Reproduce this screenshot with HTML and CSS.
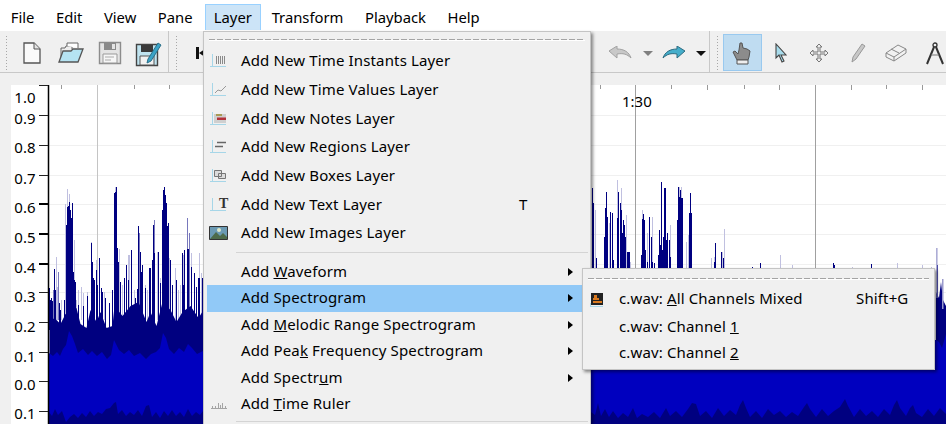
FILE: index.html
```html
<!DOCTYPE html>
<html lang="en">
<head>
    <meta charset="UTF-8">
    <title>Sonic Visualiser</title>
    <link rel="stylesheet" href="styles.css">
</head>
<body>
    <div class="menubar">
        <span class="menubar-item">File</span>
        <span class="menubar-item">Edit</span>
        <span class="menubar-item">View</span>
        <span class="menubar-item">Pane</span>
        <span class="menubar-item menubar-item-open">Layer</span>
        <span class="menubar-item">Transform</span>
        <span class="menubar-item">Playback</span>
        <span class="menubar-item">Help</span>
    </div>

    <div class="toolbar">
        <div class="tool-group">
            <span class="handle"></span>
            <div class="tool">
                <svg width="20" height="24" viewBox="0 0 20 24"><path d="M2 2h10l6 6v14H2z" fill="#fafafa" stroke="#555" stroke-width="1.3"/><path d="M12 2v6h6" fill="#e4e4e4" stroke="#555"/></svg>
            </div>
            <div class="tool">
                <svg width="26" height="22" viewBox="0 0 26 22"><path d="M3 18V6h4l1-2h6v3" fill="#eee" stroke="#666"/><path d="M9 4V1h11v5" fill="#fff" stroke="#666"/><path d="M1 20 5 9h8l2-2h10l-5 13z" fill="#b5e3f2" stroke="#555" stroke-width="1.3"/></svg>
            </div>
            <div class="tool">
                <svg width="24" height="24" viewBox="0 0 24 24"><path d="M1.500 1.500h21v21h-21z" fill="#e4e4e4" stroke="#8c8c8c" stroke-width="1.4"/><path d="M6 2h12v7H6z" fill="#8a8a8a"/><path d="M14 3h3v5h-3z" fill="#e4e4e4"/><path d="M5 13h14v9H5z" fill="#f6f6f6" stroke="#999"/><path d="M7 16h9M7 19h6" stroke="#aaa"/></svg>
            </div>
            <div class="tool">
                <svg width="27" height="27" viewBox="0 0 27 27"><path d="M1.500 4.500h21v21h-21z" fill="#bfe3ef" stroke="#444" stroke-width="1.4"/><path d="M6 5h12v7H6z" fill="#3a3a3a"/><path d="M5 16h14v9H5z" fill="#f2f2f2" stroke="#555"/><path d="M13 19 23 3l3 2-10 16-4 2z" fill="#3aa3c7" stroke="#2b6f88"/></svg>
            </div>
            <span class="tool-sep"></span>
            <span class="handle"></span>
            <div class="tool">
                <svg width="12" height="12" viewBox="0 0 12 12"><path d="M0 0h3v12H0zM12 0v12L3 6z" fill="#111"/></svg>
            </div>
        </div>

        <div class="tool-group tool-group-right">
            <div class="tool">
                <svg width="24" height="14" viewBox="0 0 24 14"><path d="M1 5 9 0v3c7 0 12 3 14 9-4-4-8-5-14-4v4z" fill="#c8c8c8" stroke="#a2a2a2"/></svg>
            </div>
            <div class="tool-arrow"><span class="drop drop-off"></span></div>
            <div class="tool tool-redo">
                <svg width="24" height="14" viewBox="0 0 24 14"><path d="M23 5 15 0v3C8 3 3 6 1 12c4-4 8-5 14-4v4z" fill="#45aecb" stroke="#2d6b80"/></svg>
            </div>
            <div class="tool-arrow tool-arrow-last"><span class="drop"></span></div>
            <span class="tool-sep"></span>
            <span class="handle"></span>
            <div class="tool tool-mode tool-on">
                <svg width="20" height="24" viewBox="0 0 20 24"><path d="M5 19 1 11l2-1 3 3 1-4 1-7h2l1 5 4 1 3 2-1 6-1 3z" fill="#8c8c8c" stroke="#555"/><path d="M5 19h11v4H5z" fill="#eee" stroke="#555"/></svg>
            </div>
            <div class="tool tool-mode">
                <svg width="12" height="20" viewBox="0 0 12 20"><path d="M1 1v14l3-3 3 7 2-1-3-6h5z" fill="#a8dcec" stroke="#444" stroke-width="1.1"/></svg>
            </div>
            <div class="tool tool-mode">
                <svg width="20" height="20" viewBox="0 0 20 20"><path d="M10 1l3 3h-2v5h5V7l3 3-3 3v-2h-5v5h2l-3 3-3-3h2v-5H4v2l-3-3 3-3v2h5V4H7z" fill="#eee" stroke="#777"/></svg>
            </div>
            <div class="tool tool-mode">
                <svg width="16" height="20" viewBox="0 0 16 20"><path d="M12 1l3 2L6 16l-4 3 1-5z" fill="#c8c8c8" stroke="#999"/></svg>
            </div>
            <div class="tool tool-mode">
                <svg width="22" height="18" viewBox="0 0 22 18"><path d="M1 9 13 1l8 4v4L9 17l-8-4z" fill="#f2f2f2" stroke="#888"/><path d="M1 9l8 4 12-8M9 13v4M6 5l8 4" fill="none" stroke="#888"/></svg>
            </div>
            <div class="tool tool-mode">
                <svg width="18" height="24" viewBox="0 0 18 24"><circle cx="9" cy="4" r="2" fill="none" stroke="#333" stroke-width="1.3"/><path d="M8 6 1 23M10 6l7 17" stroke="#333" stroke-width="2"/><path d="M5 14h8" stroke="#777"/></svg>
            </div>
        </div>
    </div>

    <div class="pane-strip"></div>

    <div class="pane">
        <svg class="pane-canvas" width="935" height="339" viewBox="11 85 935 339">
            <!-- grid -->
            <path class="grid-h" d="M49 115.500H946M49 145.500H946M49 175.500H946M49 204.500H946M49 234.500H946M49 264.500H946M49 292.500H946"/>
            <path class="grid-v" d="M97.500 85V424"/>
            <path class="grid-v-dark" d="M635.500 85V424M815.500 85V424"/>
            <path class="tick-top" d="M61.500 85v4M134.500 85v4M169.500 85v4M600.500 85v4M671.500 85v4M707.500 85v5M744.500 85v4M779.500 85v5M851.500 85v5M886.500 85v4M922.500 85v5"/>

            <!-- waveform peaks, left of the menu -->
            <g transform="translate(.5 0)">
                <path class="wave-light" d="M56 257V320M57 287V320M61 300V320M65 204V320M67 189V320M69 194V320M72 203V320M74 240V320M76 300V320M78 290V320M81 287V320M83 293V320M87 292V320M91 242V320M96 260V320M97 270V320M104 292V320M115 187V320M119 249V320M122 285V320M128 255V320M129 255V320M134 290V320M139 233V320M145 285V320M147 290V320M154 253V320M157 252V320M160 278V320M168 227V320M169 258V320M175 268V320M178 290V320M180 285V320M183 255V320M191 253V320M194 273V320M199 253V320M201 273V320"/>
                <path class="wave-mid" d="M187 218V320M189 233V320M53 290V320M58 272V320M72 203V320M139 233V320M154 220V320M168 227V320"/>
                <path class="wave-dark-poly" d="M49 424V322L54 318 60 324 65 314 76 308 80 324 86 328 90 310 96 322 100 312 106 328 112 326 114 306 122 316 130 306 138 302 146 322 150 312 156 326 162 302 170 310 176 322 182 312 190 306 198 318 203 310V424z"/>
                <path class="wave-dark" d="M49 288V330M50 300V330M51 298V330M52 301V330M54 269V330M55 290V330M59 303V330M60 310V330M64 300V330M66 225V330M67 207V330M68 206V330M69 202V330M70 210V330M71 218V330M72 203V330M73 272V330M74 280V330M75 282V330M78 305V330M83 306V330M87 296V330M91 243V330M92 262V330M93 278V330M94 280V330M96 270V330M97 285V330M99 258V330M101 288V330M102 292V330M105 298V330M109 303V330M112 290V330M114 193V330M115 192V330M116 187V330M117 248V330M118 262V330M120 282V330M124 278V330M126 265V330M128 280V330M131 250V330M135 298V330M137 289V330M138 226V330M140 252V330M141 272V330M142 265V330M145 288V330M149 268V330M150 268V330M152 260V330M153 225V330M154 253V330M158 252V330M160 283V330M162 210V330M163 190V330M164 187V330M165 195V330M166 203V330M167 226V330M168 223V330M170 260V330M172 285V330M176 280V330M182 253V330M183 285V330M184 250V330M187 249V330M188 249V330M191 267V330M194 273V330M196 287V330M198 278V330M199 278V330M202 278V330"/>
            </g>

            <!-- waveform peaks, right of the menu -->
            <g transform="translate(.5 0)">
                <path class="wave-light" d="M595 210V300M609 223V300M617 180V300M621 188V300M626 215V300M630 262V300M642 210V300M647 233V300M652 217V300M670 225V300M679 187V300M681 187V300M686 242V300M688 235V300M711 258V300M714 257V300M722 252V300M724 229V300M780 255V300M792 265V300M852 267V300M885 268V300M897 263V300M922 265V300M931 267V300M936 248V300"/>
                <path class="wave-dark" d="M592 188V300M593 203V300M596 258V300M604 237V300M605 208V300M606 192V300M607 217V300M610 212V300M612 213V300M613 260V300M617 218V300M618 192V300M620 203V300M621 210V300M622 233V300M623 220V300M624 225V300M625 237V300M627 252V300M628 252V300M629 252V300M641 255V300M642 219V300M643 214V300M644 220V300M645 250V300M647 262V300M649 217V300M651 237V300M652 262V300M654 263V300M658 255V300M659 230V300M660 245V300M661 182V300M662 250V300M663 237V300M664 188V300M665 188V300M666 240V300M667 233V300M669 240V300M670 257V300M677 220V300M678 187V300M679 197V300M680 190V300M681 198V300M682 198V300M689 213V300M690 193V300M691 213V300M714 262V300M715 243V300M721 252V300M723 258V300M752 267V300M760 263V300M833 263V300M834 265V300M871 264V300M937 265V300"/>
            </g>
            <path class="wave-dark-poly" d="M936 424V292L939 298 941 282 943 300 946 306V424z"/>
            <path class="wave-mid-fill" d="M936.500 248h1v50h-1zM942 279h1.500v30H942z"/>

            <!-- core of the signal -->
            <path class="wave-core" d="M49 424V353L53 356 57 352 60 356 63 349 66 345 69 331 72 336 75 344 78 353 83 349 88 355 92 351 97 356 102 352 107 359 111 355 114 340 116 344 119 350 124 354 129 350 134 356 140 353 146 359 151 354 156 352 160 348 163 333 166 338 169 349 174 354 179 348 184 352 188 344 192 348 197 354 203 351V340H936L939 342 942 348 946 334V424z"/>

            <!-- dark troughs along the bottom -->
            <path class="wave-dark-poly" d="M49 424V412L52 416 55 409 58 415 62 411 66 422 70 417 74 414 78 418 82 413 86 417 90 411 94 416 98 412 102 414 106 409 110 408 114 403 116 402 118 414 122 410 126 416 130 412 134 415 138 410 142 416 146 406 149 405 152 417 156 412 160 418 164 411 168 416 172 410 176 416 180 412 184 417 188 409 192 416 196 412 200 415 203 411V424zM591 424V412L595 415 598 403 601 416 605 409 609 417 613 411 618 418 623 413 628 417 633 408 637 418 642 414 648 417 654 412 660 418 666 408 670 416 676 411 682 417 688 409 692 403 696 404 700 416 706 411 712 418 718 408 724 416 730 410 736 415 740 405 743 400 746 408 750 417 756 411 762 418 768 409 774 415 780 411 786 417 792 412 798 416 804 407 807 403 810 409 816 417 822 409 828 416 834 411 840 407 845 399 848 406 854 417 860 409 866 416 872 411 878 417 884 409 890 415 894 405 897 400 900 408 906 416 910 408 913 405 916 413 922 417 928 409 934 416 940 408 946 414V424z"/>

            <!-- vertical scale -->
            <path class="axis" d="M48.500 85V424"/>
            <path class="axis-tick" d="M39 85.500H48M39 115.500H48M39 145.500H48M39 175.500H48M39 292.500H48M39 322.500H48M39 352.500H48M39 381.500H48M39 411.500H48"/>
            <path class="axis-tick-bold" d="M39 204H48M39 234H48M39 264H48"/>
            <g class="scale-labels">
                <text x="35.500" y="103">1.0</text>
                <text x="35.500" y="124">0.9</text>
                <text x="35.500" y="153">0.8</text>
                <text x="35.500" y="184">0.7</text>
                <text x="35.500" y="213">0.6</text>
                <text x="35.500" y="243">0.5</text>
                <text x="35.500" y="273">0.4</text>
                <text x="35.500" y="302">0.3</text>
                <text x="35.500" y="332">0.2</text>
                <text x="35.500" y="362">0.1</text>
                <text x="35.500" y="390">0.0</text>
                <text x="35.500" y="419">0.1</text>
            </g>
            <text class="time-label" x="622" y="107">1:30</text>
        </svg>
    </div>

    <!-- Layer menu -->
    <div class="menu layer-menu">
        <div class="tearoff"></div>
        <div class="menu-row menu-row-tall">
            <svg class="menu-icon" width="24" height="24" viewBox="0 0 24 24"><path class="icon-axis" d="M4.500 5v13M2 17.500h16"/><path class="icon-mark" d="M8.500 7v8M10.500 7v8M12.500 7v8M14.500 7v8M16.500 7v8"/></svg>
            <span class="menu-label">Add New Time Instants Layer</span>
        </div>
        <div class="menu-row menu-row-tall">
            <svg class="menu-icon" width="24" height="24" viewBox="0 0 24 24"><path class="icon-axis" d="M4.500 5v13M2 17.500h16"/><path class="icon-line" d="M7 15l3-3 3 1 5-5"/></svg>
            <span class="menu-label">Add New Time Values Layer</span>
        </div>
        <div class="menu-row menu-row-tall">
            <svg class="menu-icon" width="24" height="24" viewBox="0 0 24 24"><path class="icon-axis" d="M4.500 5v13M2 17.500h16"/><path d="M6 7h12v9H6z" fill="#cfcfcf"/><path d="M8 7h6v2H8z" fill="#a89a55"/><path d="M9 10.500h9v2.500H9z" fill="#b3323a"/></svg>
            <span class="menu-label">Add New Notes Layer</span>
        </div>
        <div class="menu-row menu-row-tall">
            <svg class="menu-icon" width="24" height="24" viewBox="0 0 24 24"><path class="icon-axis" d="M4.500 5v13M2 17.500h16"/><path class="icon-bar" d="M9 7.500h9M7 11.500h8"/></svg>
            <span class="menu-label">Add New Regions Layer</span>
        </div>
        <div class="menu-row menu-row-tall">
            <svg class="menu-icon" width="24" height="24" viewBox="0 0 24 24"><path class="icon-axis" d="M4.500 5v13M2 17.500h16"/><path class="icon-box" d="M6.500 6.500h7v6h-7zM10.500 9.500h7v5h-7z"/></svg>
            <span class="menu-label">Add New Boxes Layer</span>
        </div>
        <div class="menu-row menu-row-tall">
            <svg class="menu-icon" width="24" height="24" viewBox="0 0 24 24"><path class="icon-axis" d="M4.500 5v13M2 17.500h16"/><text class="icon-t" x="11" y="15">T</text></svg>
            <span class="menu-label">Add New Text Layer</span>
            <span class="menu-key">T</span>
        </div>
        <div class="menu-row menu-row-tall">
            <svg class="menu-icon" width="24" height="24" viewBox="0 0 24 24"><path d="M1.500 5.500h18v13h-18z" fill="#6b9ab3" stroke="#333"/><circle cx="11" cy="9" r="2" fill="#dfe8c8"/><path d="M2 18l6-7 4 4 3-3 4 4v2z" fill="#4d6b4a"/></svg>
            <span class="menu-label">Add New Images Layer</span>
        </div>
        <div class="menu-sep"></div>
        <div class="menu-row">
            <span class="menu-icon-empty"></span>
            <span class="menu-label">Add <u>W</u>aveform</span>
            <span class="menu-arrow"></span>
        </div>
        <div class="menu-row menu-row-on">
            <span class="menu-icon-empty"></span>
            <span class="menu-label">Add Spectrogram</span>
            <span class="menu-arrow"></span>
        </div>
        <div class="menu-row">
            <span class="menu-icon-empty"></span>
            <span class="menu-label">Add <u>M</u>elodic Range Spectrogram</span>
            <span class="menu-arrow"></span>
        </div>
        <div class="menu-row">
            <span class="menu-icon-empty"></span>
            <span class="menu-label">Add Pea<u>k</u> Frequency Spectrogram</span>
            <span class="menu-arrow"></span>
        </div>
        <div class="menu-row">
            <span class="menu-icon-empty"></span>
            <span class="menu-label">Add Spectr<u>u</u>m</span>
            <span class="menu-arrow"></span>
        </div>
        <div class="menu-row">
            <svg class="menu-icon" width="24" height="24" viewBox="0 0 24 24"><path class="icon-ruler" d="M3 16.500h16M4.500 14v2M7.500 14v2M10.500 11v5M12.500 13v3M14.500 11v5M17.500 14v2"/></svg>
            <span class="menu-label">Add <u>T</u>ime Ruler</span>
        </div>
        <div class="menu-sep"></div>
    </div>

    <!-- Add Spectrogram submenu -->
    <div class="menu spectrogram-menu">
        <div class="tearoff"></div>
        <div class="menu-row menu-row-tall">
            <svg class="menu-icon menu-icon-sub" width="24" height="24" viewBox="0 0 24 24"><path class="icon-axis" d="M4 19.500h13M4.500 16v4"/><path d="M5 6h12v12H5z" fill="#222"/><path d="M8 8h3v3H8zM7 11h6v2H7zM7 14h9v2H7z" fill="#d9791f"/></svg>
            <span class="menu-label sub-label">c.wav: <u>A</u>ll Channels Mixed</span>
            <span class="menu-key">Shift+G</span>
        </div>
        <div class="menu-row">
            <span class="menu-icon-empty sub-empty"></span>
            <span class="menu-label">c.wav: Channel <u>1</u></span>
        </div>
        <div class="menu-row">
            <span class="menu-icon-empty sub-empty"></span>
            <span class="menu-label">c.wav: Channel <u>2</u></span>
        </div>
    </div>
</body>
</html>
```

FILE: styles.css
```css
* {
    margin: 0;
    padding: 0;
    box-sizing: border-box;
}

body {
    width: 946px;
    height: 424px;
    overflow: hidden;
    background: #f0f0f0;
    color: #000;
    font-family: "Noto Sans", sans-serif;
    font-size: 15px;
    position: relative;
}

/* menu bar */
.menubar {
    height: 31px;
    background: #fff;
    display: flex;
    align-items: flex-start;
    padding: 4px 0 0 0;
    font-size: 14.800px;
}

.menubar-item {
    height: 26px;
    line-height: 27px;
    padding: 0 9.750px;
    border: 1px solid transparent;
    border-bottom: 0;
    border-top: 0;
}

.menubar-item-open {
    background: #cce4f7;
    border-color: #99d1ff;
    border-top: 1px solid #99d1ff;
    line-height: 25px;
    padding: 0 8px;
    margin-left: 1.500px;
}

/* toolbar */
.toolbar {
    height: 42px;
    border-bottom: 1px solid #c8c8c8;
    display: flex;
    justify-content: space-between;
    padding-top: 3px;
}

.tool-group {
    display: flex;
    align-items: stretch;
}

.tool-group-right {
    margin-right: -8px;
}

.handle {
    width: 12px;
    margin: 1px 0 2px;
    background: radial-gradient(circle, #a8a8a8 0.7px, transparent 0.8px) center top / 3px 3px repeat-y;
}

.tool {
    width: 39px;
    display: flex;
    align-items: center;
    justify-content: center;
}

.tool-sep {
    width: 1px;
    margin: -3px 1px 0 0;
    background: #c8c8c8;
}

.tool-mode {
    width: 38.500px;
}

.tool-redo {
    width: 26px;
}

.tool-on {
    background: #bfdcf1;
    border: 1px solid #99c9ef;
    margin-bottom: 1px;
}

.tool-arrow {
    width: 22px;
    display: flex;
    align-items: center;
    justify-content: center;
    padding-right: 4px;
}

.tool-arrow-last {
    justify-content: flex-end;
    padding-right: 3px;
}

.drop {
    width: 0;
    height: 0;
    border-left: 5px solid transparent;
    border-right: 5px solid transparent;
    border-top: 5px solid #111;
}

.drop-off {
    border-top-color: #808080;
}

.pane-strip {
    height: 12px;
}

/* waveform pane */
.pane {
    padding-left: 11px;
}

.pane-canvas {
    display: block;
    background: #fff;
}

.grid-h {
    stroke: #f0f0f0;
    fill: none;
}

.grid-v {
    stroke: #c4c4c4;
    fill: none;
}

.grid-v-dark {
    stroke: #a0a0a0;
    fill: none;
}

.tick-top {
    stroke: #999;
    fill: none;
}

.wave-light {
    stroke: #c0c0e0;
    fill: none;
    shape-rendering: crispEdges;
}

.wave-mid {
    stroke: #7878bc;
    fill: none;
    shape-rendering: crispEdges;
}

.wave-mid-fill {
    fill: #9a9acc;
}

.wave-dark {
    stroke: #000080;
    fill: none;
    shape-rendering: crispEdges;
}

.wave-dark-poly {
    fill: #000080;
}

.wave-core {
    fill: #0000bf;
}

.axis {
    stroke: #000;
    stroke-width: 1.500;
    fill: none;
}

.axis-tick {
    stroke: #222;
    fill: none;
}

.axis-tick-bold {
    stroke: #000;
    stroke-width: 2;
    fill: none;
}

.scale-labels text {
    font-family: "Noto Sans", sans-serif;
    font-size: 15px;
    text-anchor: end;
    fill: #000;
}

.time-label {
    font-family: "Noto Sans", sans-serif;
    font-size: 15px;
    fill: #000;
}

/* menus */
.menu {
    position: absolute;
    background: #f0f0f0;
    border: 1px solid #c4c4c4;
    box-shadow: 2px 2px 3px rgba(0, 0, 0, 0.45);
    padding: 0 3px;
    letter-spacing: 0.140px;
}

.layer-menu {
    left: 203px;
    top: 31px;
    width: 388px;
    height: 393px;
    padding-top: 7px;
    border-bottom: 0;
    overflow: hidden;
}

.spectrogram-menu {
    left: 582px;
    top: 268px;
    width: 353px;
    height: 102px;
    padding-top: 9px;
}

.tearoff {
    height: 2px;
    margin: 0 2px;
    background: repeating-linear-gradient(90deg, #a4a4a4 0 6px, #f0f0f0 6px 8px) top / 100% 1px no-repeat,
        linear-gradient(#fff, #fff) bottom / 100% 1px no-repeat;
}

.layer-menu .tearoff {
    margin-bottom: 6px;
}

.spectrogram-menu .tearoff {
    margin-bottom: 5px;
}

.menu-row {
    height: 26.400px;
    display: flex;
    align-items: center;
    white-space: nowrap;
}

.menu-row-tall {
    height: 28.700px;
}

.menu-row-on {
    background: #91c9f7;
}

.menu-icon {
    flex: none;
    margin: 0 9px 0 1px;
}

.menu-icon-sub {
    margin: 0 9px 0 0;
}

.menu-icon-empty {
    flex: none;
    width: 34px;
}

.sub-empty {
    width: 33px;
}

.menu-label {
    width: 278px;
    padding-bottom: 2px;
}

.sub-label {
    width: 237px;
}

.menu-key {
    flex: none;
    padding-bottom: 2px;
}

.menu-arrow {
    width: 0;
    height: 0;
    margin-left: 49px;
    border-top: 4px solid transparent;
    border-bottom: 4px solid transparent;
    border-left: 5px solid #000;
}

.menu-sep {
    height: 1px;
    margin: 4px -1px 6px 29px;
    background: #d4d4d4;
}

/* small menu icons */
.icon-axis {
    stroke: #a6d6e8;
    fill: none;
}

.icon-mark {
    stroke: #8a8a8a;
    fill: none;
}

.icon-line {
    stroke: #999;
    fill: none;
}

.icon-bar {
    stroke: #666;
    stroke-width: 1.500;
    fill: none;
}

.icon-box {
    stroke: #777;
    fill: #dcdcdc;
}

.icon-t {
    font-family: "Liberation Serif", serif;
    font-size: 14px;
    font-weight: bold;
    fill: #333;
}

.icon-ruler {
    stroke: #a4a4a4;
    fill: none;
}
```
